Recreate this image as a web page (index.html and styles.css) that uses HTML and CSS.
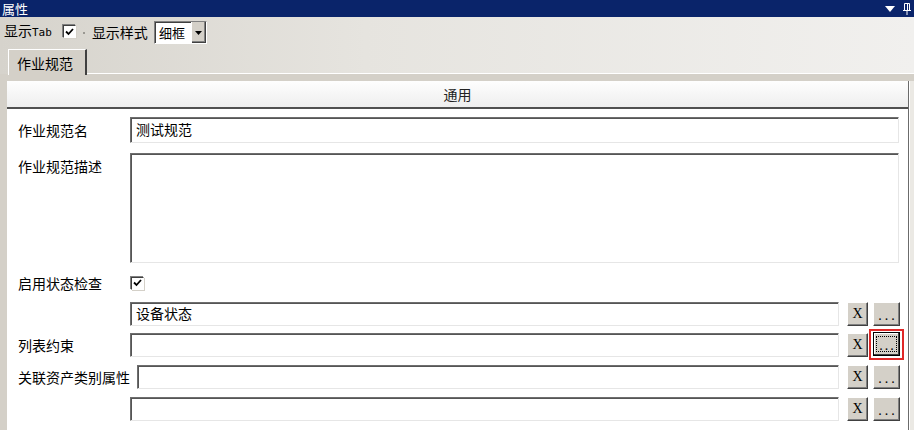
FILE: index.html
```html
<!DOCTYPE html>
<html>
<head>
<meta charset="utf-8">
<link rel="stylesheet" href="styles.css">
</head>
<body>
<div class="titlebar">
  <span class="title">属性</span>
  <span class="title-icons">
    <svg width="10" height="6" viewBox="0 0 10 6"><path d="M0 0H10L5 6Z" fill="#fff"/></svg>
    <svg width="8" height="12" viewBox="0 0 8 12"><path d="M1.5 0.5H6.5V7.5H1.5Z M0 7.5H8 M4 7.5V12 M4.5 1V7" fill="none" stroke="#fff" stroke-width="1"/></svg>
  </span>
</div>
<div class="toolbar">
  <span class="tb-label">显示<span class="tab-word">Tab</span></span>
  <span class="check tb-check"><svg width="9" height="8" viewBox="0 0 9 8"><path d="M1 3.5L3.5 6L8 1" fill="none" stroke="#000" stroke-width="1.8"/></svg></span>
  <span class="sep"></span>
  <span class="tb-label">显示样式</span>
  <span class="combo"><span class="combo-text">细框</span><span class="combo-btn"><svg width="7" height="4" viewBox="0 0 7 4"><path d="M0 0H7L3.5 4Z" fill="#000"/></svg></span></span>
</div>
<div class="tabrow">
  <div class="tab">作业规范</div>
  <div class="tab-line"></div>
</div>
<div class="body">
  <div class="leftstrip"></div>
  <div class="panel">
    <div class="panel-head">通用</div>
    <div class="form">
      <div class="row r1">
        <span class="lbl">作业规范名</span>
        <span class="input grow">测试规范</span>
      </div>
      <div class="row r2">
        <span class="lbl lbl-top">作业规范描述</span>
        <span class="input grow tall"></span>
      </div>
      <div class="row r3">
        <span class="lbl">启用状态检查</span>
        <span class="check"><svg width="9" height="8" viewBox="0 0 9 8"><path d="M1 3.5L3.5 6L8 1" fill="none" stroke="#000" stroke-width="1.8"/></svg></span>
      </div>
      <div class="row r4">
        <span class="lbl"></span>
        <span class="input short">设备状态</span>
        <span class="btn btn-x">X</span>
        <span class="btn btn-dots">...</span>
      </div>
      <div class="row r5">
        <span class="lbl">列表约束</span>
        <span class="input short"></span>
        <span class="btn btn-x">X</span>
        <span class="focus-ring"><span class="btn btn-dots pressed"><span class="dotted">...</span></span></span>
      </div>
      <div class="row r6">
        <span class="lbl lbl-wide">关联资产类别属性</span>
        <span class="input short"></span>
        <span class="btn btn-x">X</span>
        <span class="btn btn-dots">...</span>
      </div>
      <div class="row r7">
        <span class="lbl"></span>
        <span class="input short"></span>
        <span class="btn btn-x">X</span>
        <span class="btn btn-dots">...</span>
      </div>
    </div>
  </div>
  <div class="rightstrip"></div>
</div>
</body>
</html>
```

FILE: styles.css
```css
html, body {
  margin: 0;
  padding: 0;
}
body {
  width: 914px;
  height: 430px;
  overflow: hidden;
  background: #d4d0c8;
  font-family: "Noto Sans CJK SC", "DejaVu Sans", sans-serif;
  font-size: 14px;
  color: #000;
}
.titlebar {
  height: 17px;
  background: #0a246a;
  color: #fff;
  display: flex;
  align-items: center;
  justify-content: space-between;
  padding: 0 3px 0 2px;
  overflow: hidden;
}
.title {
  font-size: 13px;
  line-height: 15px;
  height: 15px;
}
.title-icons {
  display: flex;
  align-items: center;
  gap: 8px;
}
.toolbar {
  height: 29px;
  display: flex;
  align-items: center;
  padding-left: 4px;
  background: linear-gradient(to right, #d6d3cc 0%, #e6e4df 40%, #f1f0ee 100%);
}
.tb-label {
  font-size: 14px;
  line-height: 16px;
}
.tab-word {
  font-family: "DejaVu Sans Mono", monospace;
  font-size: 11px;
}
.check {
  width: 11px;
  height: 11px;
  background: #fff;
  border: 1px solid;
  border-color: #404040 #fff #fff #404040;
  box-shadow: -1px -1px 0 #808080, 1px 1px 0 #d4d0c8;
  display: inline-flex;
  align-items: center;
  justify-content: center;
  flex: 0 0 auto;
}
.tb-check {
  margin-left: 11px;
}
.sep {
  width: 2px;
  height: 2px;
  background: #9a9892;
  margin: 2px 7px 0 7px;
}
.combo {
  margin-left: 6px;
  width: 51px;
  height: 21px;
  background: #fff;
  border: 1px solid;
  border-color: #808080 #fff #fff #808080;
  box-shadow: inset 1px 1px 0 #404040;
  display: flex;
  align-items: stretch;
  overflow: hidden;
  margin-top: 2px;
}
.combo-text {
  flex: 1;
  padding-left: 4px;
  font-size: 13px;
  line-height: 21px;
  overflow: hidden;
  white-space: nowrap;
}
.combo-btn {
  width: 14px;
  background: #d4d0c8;
  border-left: 1px solid #fff;
  box-shadow: inset -1px -1px 0 #404040, inset -2px -2px 0 #808080;
  display: flex;
  align-items: center;
  justify-content: center;
}
.tabrow {
  height: 28px;
  display: flex;
  align-items: flex-end;
  background: linear-gradient(to right, #d6d3cc 0%, #e6e4df 40%, #f1f0ee 100%);
}
.tab {
  width: 79px;
  height: 26px;
  margin-left: 8px;
  background: #d4d0c8;
  border-top: 1px solid #fff;
  border-left: 1px solid #fff;
  border-right: 2px solid #404040;
  box-sizing: border-box;
  display: flex;
  align-items: center;
  padding-left: 8px;
  font-size: 14px;
  margin-bottom: -1px;
}
.tab-line {
  flex: 1;
  height: 1px;
  background: #fff;
}
.body {
  display: flex;
  height: 356px;
  padding-top: 7px;
  background: #d4d0c8;
}
.leftstrip {
  width: 7px;
  flex: 0 0 7px;
}
.panel {
  width: 901px;
  flex: 0 0 901px;
  background: #fff;
  border-right: 1px solid #6b6b6b;
}
.rightstrip {
  flex: 1;
  background: #ebe9e4;
  border-left: 1px solid #fff;
}
.panel-head {
  height: 26px;
  background: linear-gradient(#fefefe, #eeeeee);
  border-bottom: 2px solid #505050;
  text-align: center;
  font-size: 14px;
  line-height: 26px;
  color: #222;
}
.form {
  padding: 8px 0 0 11px;
}
.row {
  display: flex;
  align-items: center;
}
.lbl {
  width: 112px;
  flex: 0 0 112px;
  font-size: 14px;
  white-space: nowrap;
}
.lbl-top {
  align-self: flex-start;
  padding-top: 3px;
}
.lbl-wide {
  width: 119px;
  flex: 0 0 119px;
}
.input {
  height: 24px;
  box-sizing: border-box;
  background: #fff;
  color: #000;
  border: 1px solid;
  border-color: #6e6e6e #e6e6e6 #e6e6e6 #6e6e6e;
  box-shadow: inset 1px 1px 0 #555;
  font-size: 14px;
  line-height: 21px;
  padding-left: 5px;
}
.grow {
  width: 769px;
}
.r1 .input { height: 26px; line-height: 23px; }
.r1 { margin-bottom: 10px; }
.tall { height: 110px; }
.r2 { margin-bottom: 13px; align-items: flex-start; }
.r3 { height: 14px; margin-bottom: 12px; }
.r3 .check { margin-left: 1px; }
.short {
  width: 709px;
  flex: 0 0 709px;
}
.lbl-wide + .short {
  width: 702px;
  flex: 0 0 702px;
}
.r4, .r5, .r6, .r7 { height: 24px; }
.r4 { margin-bottom: 7px; }
.r5 { margin-bottom: 8px; }
.r6 { margin-bottom: 8px; }
.btn {
  box-sizing: border-box;
  height: 24px;
  background: #d4d0c8;
  border: 1px solid;
  border-color: #fff #404040 #404040 #fff;
  box-shadow: inset -1px -1px 0 #808080;
  display: flex;
  align-items: center;
  justify-content: center;
  font-family: "Liberation Serif", serif;
  font-size: 14px;
  flex: 0 0 auto;
}
.btn-x {
  width: 21px;
  margin-left: 8px;
  padding-bottom: 1px;
}
.btn-dots {
  width: 27px;
  margin-left: 5px;
  align-items: flex-end;
  padding-bottom: 3px;
  line-height: 12px;
  letter-spacing: 3px;
  padding-left: 3px;
}
.focus-ring {
  margin-left: 1px;
  border: 2px solid #e02828;
  padding: 1px 2px 2px 2px;
  display: flex;
  margin-top: -1px;
}
.btn.pressed {
  margin-left: 0;
  border: 1px solid #000;
  box-shadow: inset -1px -1px 0 #404040, inset 1px 1px 0 #fff;
  padding: 3px;
  align-items: stretch;
}
.dotted {
  flex: 1;
  align-self: stretch;
  border: 1px dotted #000;
  display: flex;
  align-items: flex-end;
  justify-content: center;
  line-height: 10px;
  padding-bottom: 0;
  letter-spacing: 2px;
  padding-left: 2px;
}
```
